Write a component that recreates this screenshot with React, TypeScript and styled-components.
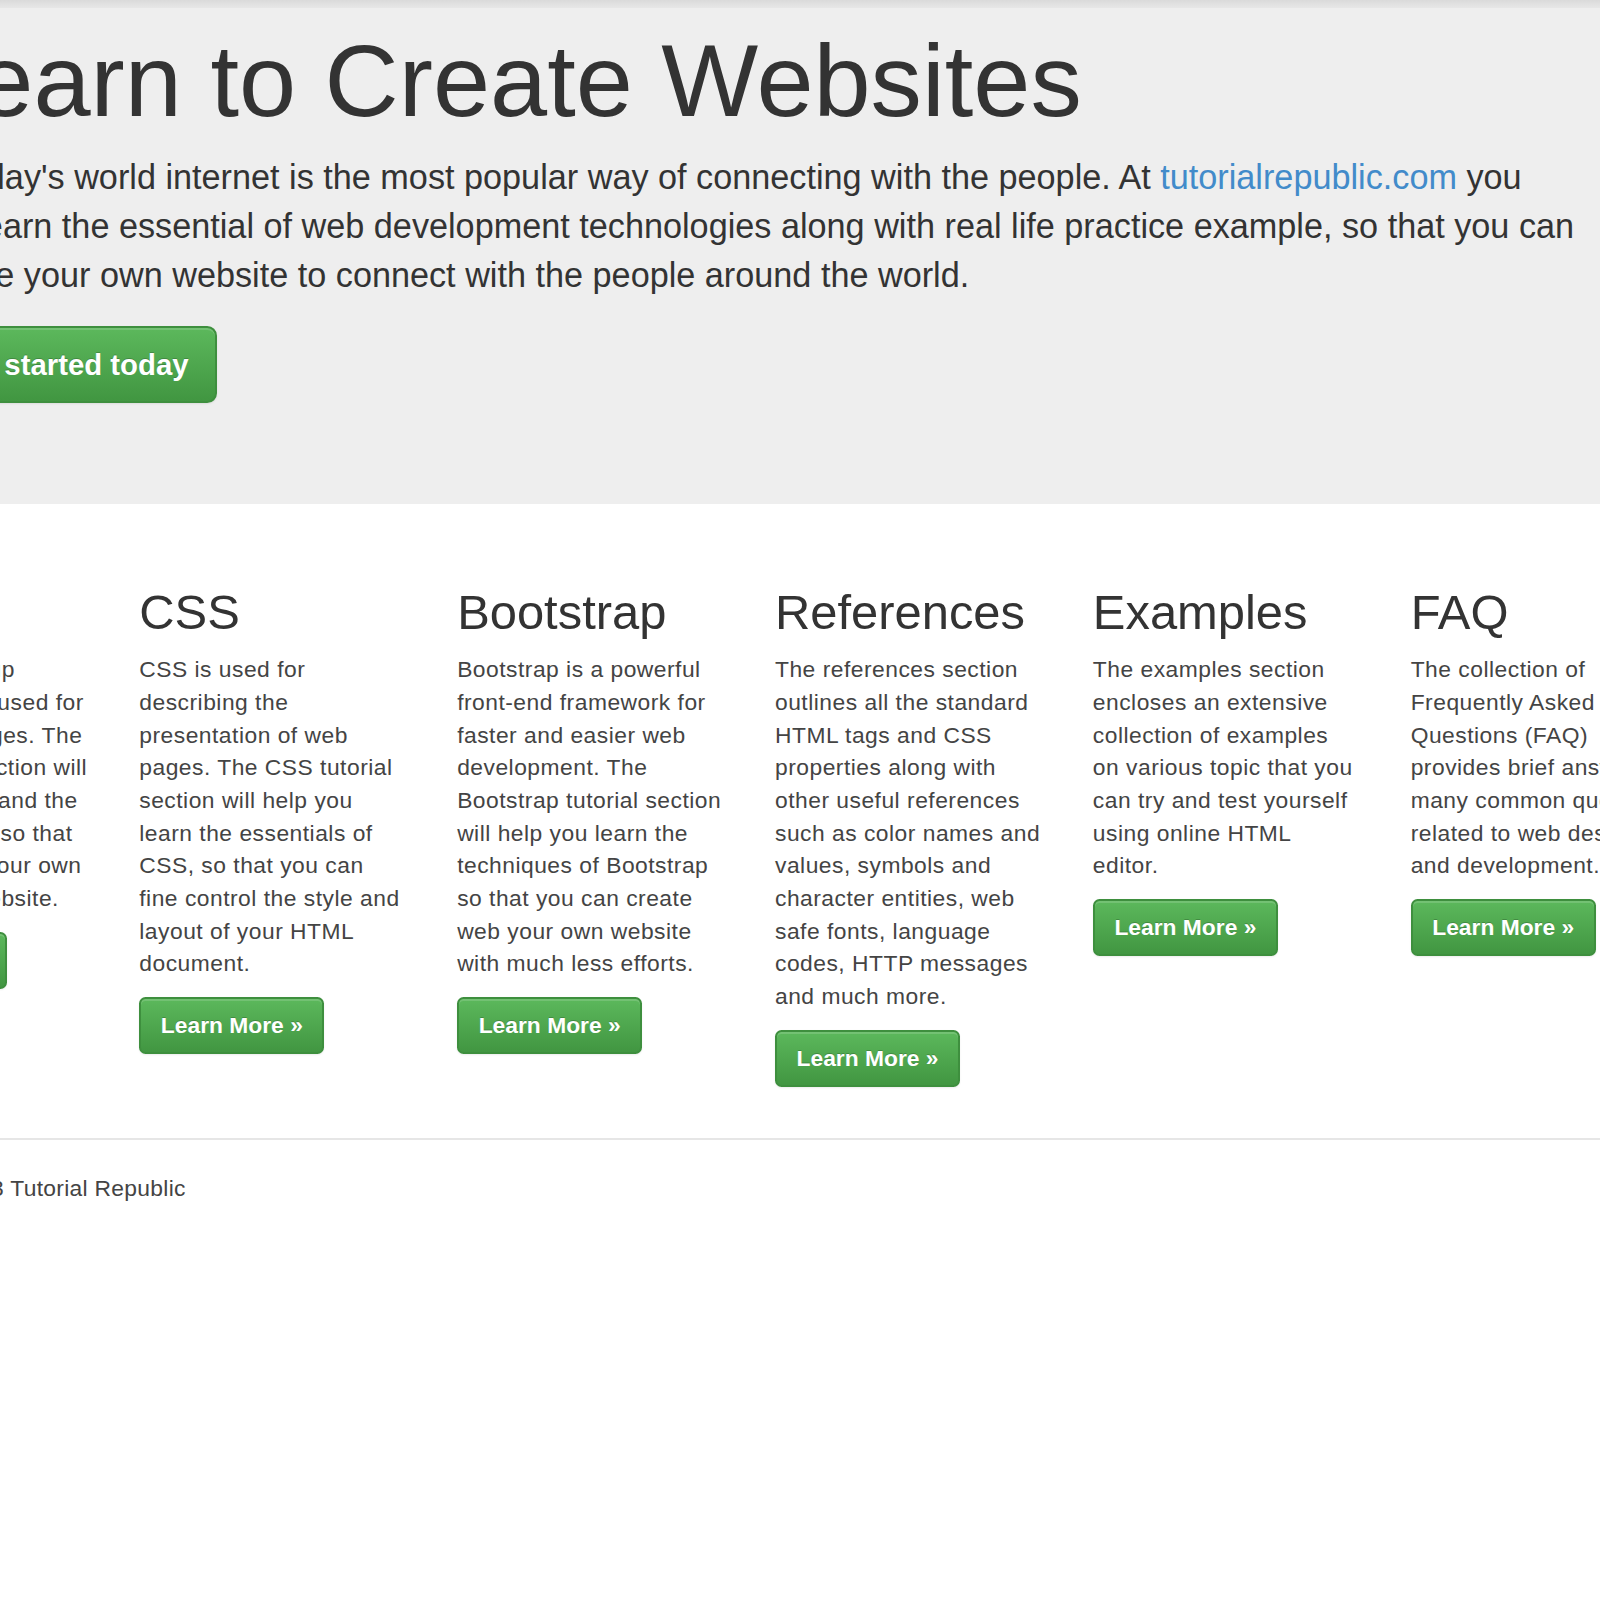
import React from 'react';
import styled, { createGlobalStyle } from 'styled-components';

// the page is a bootstrap 3 layout blown up by this factor
const K = 1.63;
const u = (n: number) => `${+(n * K).toFixed(2)}px`;

const GlobalStyle = createGlobalStyle`
  html, body {
    margin: 0;
    padding: 0;
    overflow: hidden;
    background: #fff;
  }
  body {
    font-family: "Liberation Sans", Arial, sans-serif;
    color: #333;
  }
  * { box-sizing: border-box; }
`;

const TopEdge = styled.div`
  height: 8px;
  background: linear-gradient(#dadada, #e7e7e7);
`;

const Container = styled.div`
  width: ${u(1170)};
  margin-left: -203px;
  padding: 0 ${u(15)};
`;

const Jumbotron = styled.div`
  background: #eee;
  border-radius: ${u(6)};
  padding: 17px 102px 101px ${u(60)};
`;

const Heading = styled.h1`
  font-size: ${u(63)};
  line-height: 1.1;
  font-weight: 500;
  margin: 0 0 15px;
  color: #333;
`;

const Lead = styled.p`
  font-size: ${u(21)};
  line-height: ${u(30)};
  font-weight: 200;
  margin: 0 0 26px;

  a {
    color: #428bca;
    text-decoration: none;
  }
`;

const Button = styled.a<{ $large?: boolean }>`
  display: inline-block;
  color: #fff;
  font-weight: bold;
  text-decoration: none;
  white-space: nowrap;
  font-size: ${({ $large }) => ($large ? u(18) : u(14))};
  line-height: ${({ $large }) => ($large ? '39px' : '33px')};
  padding: ${({ $large }) => ($large ? `17px ${u(16)}` : `10px ${u(12)}`)};
  border: 2px solid #3e8f3e;
  border-radius: ${({ $large }) => ($large ? u(6) : u(4))};
  background-image: linear-gradient(to bottom, #5cb85c 0%, #419641 100%);
  text-shadow: 0 -1px 0 rgba(0, 0, 0, 0.2);
  box-shadow: inset 0 2px 0 rgba(255, 255, 255, 0.15), 0 1px 2px rgba(0, 0, 0, 0.075);
`;

const Topics = styled.div`
  padding-top: 82px;
`;

const Row = styled.div`
  display: grid;
  grid-template-columns: repeat(6, 1fr);
  align-items: start;
  margin: 0 -${u(15)};
`;

// a hair narrower on the right so the lines break where the original's do
const Col = styled.div`
  padding: 0 26px 0 ${u(15)};
`;

const ColTitle = styled.h2`
  font-size: ${u(30)};
  line-height: 1.1;
  font-weight: 500;
  margin: 0 0 14px;
  color: #333;
`;

const ColText = styled.p`
  font-size: ${u(14)};
  line-height: 32.65px;
  letter-spacing: 0.5px;
  margin: 0 0 17px;
  color: #444;
`;

const Rule = styled.hr`
  margin: 51px 0 0;
  border: 0;
  border-top: 2px solid #e6e6e6;
`;

const Footer = styled.p`
  font-size: ${u(14)};
  line-height: 32.65px;
  letter-spacing: 0.3px;
  margin: 32px 0 0;
  color: #444;
`;

const topics = [
  {
    title: 'HTML',
    text: 'HTML is a markup language that is used for creating web pages. The HTML tutorial section will help you understand the basics of HTML, so that you can create your own web pages or website.',
  },
  {
    title: 'CSS',
    text: 'CSS is used for describing the presentation of web pages. The CSS tutorial section will help you learn the essentials of CSS, so that you can fine control the style and layout of your HTML document.',
  },
  {
    title: 'Bootstrap',
    text: 'Bootstrap is a powerful front-end framework for faster and easier web development. The Bootstrap tutorial section will help you learn the techniques of Bootstrap so that you can create web your own website with much less efforts.',
  },
  {
    title: 'References',
    text: 'The references section outlines all the standard HTML tags and CSS properties along with other useful references such as color names and values, symbols and character entities, web safe fonts, language codes, HTTP messages and much more.',
  },
  {
    title: 'Examples',
    text: 'The examples section encloses an extensive collection of examples on various topic that you can try and test yourself using online HTML editor.',
  },
  {
    title: 'FAQ',
    text: 'The collection of Frequently Asked Questions (FAQ) provides brief answers to many common questions related to web design and development.',
  },
];

export default function App() {
  return (
    <>
      <GlobalStyle />
      <TopEdge />
      <Container>
        <Jumbotron>
          <Heading>Learn to Create Websites</Heading>
          <Lead>
            In today's world internet is the most popular way of connecting with the people. At{' '}
            <a href="#">tutorialrepublic.com</a> you will learn the essential of web development
            technologies along with real life practice example, so that you can create your own
            website to connect with the people around the world.
          </Lead>
          <Button $large href="#">
            Get started today
          </Button>
        </Jumbotron>

        <Topics>
          <Row>
            {topics.map((t) => (
              <Col key={t.title}>
                <ColTitle>{t.title}</ColTitle>
                <ColText>{t.text}</ColText>
                <Button href="#">Learn More &raquo;</Button>
              </Col>
            ))}
          </Row>
        </Topics>

        <Rule />
        <Footer>Copyright &copy; 2013 Tutorial Republic</Footer>
      </Container>
    </>
  );
}
